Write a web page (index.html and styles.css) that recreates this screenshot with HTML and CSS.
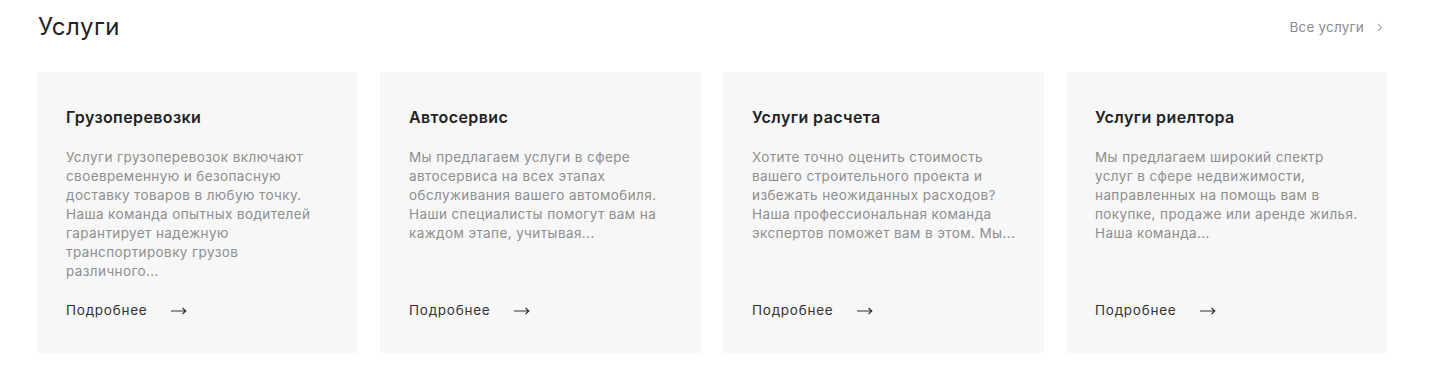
FILE: index.html
```html
<!DOCTYPE html>
<html lang="ru">
<head>
<meta charset="utf-8">
<title>Услуги</title>
<link rel="stylesheet" href="styles.css">
</head>
<body>
<section class="services">
  <div class="services-head">
    <h2 class="services-title">Услуги</h2>
    <a class="all-link" href="#">Все услуги
      <svg class="chev" width="6" height="9" viewBox="0 0 6 9"><path d="M1 0.8 L4.6 4.5 L1 8.2" fill="none" stroke="#aaa" stroke-width="1.1"/></svg>
    </a>
  </div>
  <div class="cards">
    <article class="card">
      <h3 class="card-title">Грузоперевозки</h3>
      <p class="card-text">Услуги грузоперевозок включают<br>своевременную и безопасную<br>доставку товаров в любую точку.<br>Наша команда опытных водителей<br>гарантирует надежную<br>транспортировку грузов<br>различного...</p>
      <a class="more" href="#">Подробнее <svg class="arrow" width="16" height="8" viewBox="0 0 16 8"><path d="M0 4 H14.5 M11.5 1 L14.8 4 L11.5 7" fill="none" stroke="#333" stroke-width="1.2"/></svg></a>
    </article>
    <article class="card">
      <h3 class="card-title">Автосервис</h3>
      <p class="card-text">Мы предлагаем услуги в сфере<br>автосервиса на всех этапах<br>обслуживания вашего автомобиля.<br>Наши специалисты помогут вам на<br>каждом этапе, учитывая...</p>
      <a class="more" href="#">Подробнее <svg class="arrow" width="16" height="8" viewBox="0 0 16 8"><path d="M0 4 H14.5 M11.5 1 L14.8 4 L11.5 7" fill="none" stroke="#333" stroke-width="1.2"/></svg></a>
    </article>
    <article class="card">
      <h3 class="card-title">Услуги расчета</h3>
      <p class="card-text">Хотите точно оценить стоимость<br>вашего строительного проекта и<br>избежать неожиданных расходов?<br>Наша профессиональная команда<br>экспертов поможет вам в этом. Мы...</p>
      <a class="more" href="#">Подробнее <svg class="arrow" width="16" height="8" viewBox="0 0 16 8"><path d="M0 4 H14.5 M11.5 1 L14.8 4 L11.5 7" fill="none" stroke="#333" stroke-width="1.2"/></svg></a>
    </article>
    <article class="card">
      <h3 class="card-title">Услуги риелтора</h3>
      <p class="card-text">Мы предлагаем широкий спектр<br>услуг в сфере недвижимости,<br>направленных на помощь вам в<br>покупке, продаже или аренде жилья.<br>Наша команда...</p>
      <a class="more" href="#">Подробнее <svg class="arrow" width="16" height="8" viewBox="0 0 16 8"><path d="M0 4 H14.5 M11.5 1 L14.8 4 L11.5 7" fill="none" stroke="#333" stroke-width="1.2"/></svg></a>
    </article>
  </div>
</section>
</body>
</html>
```
FILE: styles.css
```css
* { box-sizing: border-box; }
html, body { margin: 0; padding: 0; background: #fff; }
body {
  font-family: Inter, "Noto Sans", "DejaVu Sans", sans-serif;
  color: #222;
}
.services {
  width: 1350px;
  margin-left: 37px;
  padding-top: 12px;
}
.services-head {
  display: flex;
  justify-content: space-between;
  align-items: center;
  height: 30px;
  margin-bottom: 30px;
}
.services-title {
  margin: 0 0 0 1px;
  font-size: 24px;
  font-weight: 400;
  line-height: 30px;
  color: #222;
  letter-spacing: 0.5px;
}
.all-link {
  display: flex;
  align-items: center;
  gap: 13px;
  font-size: 13.5px;
  color: #8c8c8c;
  text-decoration: none;
  margin-right: 4px;
  letter-spacing: 0.2px;
}
.cards {
  display: grid;
  grid-template-columns: repeat(4, 321px);
  gap: 22px;
}
.card {
  background: #f7f7f7;
  padding: 35px 29px 33px;
  display: flex;
  flex-direction: column;
  height: 281px;
}
.card-title {
  margin: 0;
  font-size: 16px;
  font-weight: 600;
  line-height: 20px;
  color: #222;
  letter-spacing: 0.4px;
}
.card-text {
  margin: 21px 0 0;
  font-size: 13.5px;
  line-height: 19px;
  color: #8e8e8e;
  letter-spacing: 0.4px;
  white-space: nowrap;
}
.more {
  margin-top: auto;
  display: flex;
  align-items: center;
  gap: 24px;
  font-size: 13.5px;
  line-height: 19px;
  color: #333;
  text-decoration: none;
  letter-spacing: 0.75px;
}
.arrow { display: block; }
.chev { display: block; }
```
